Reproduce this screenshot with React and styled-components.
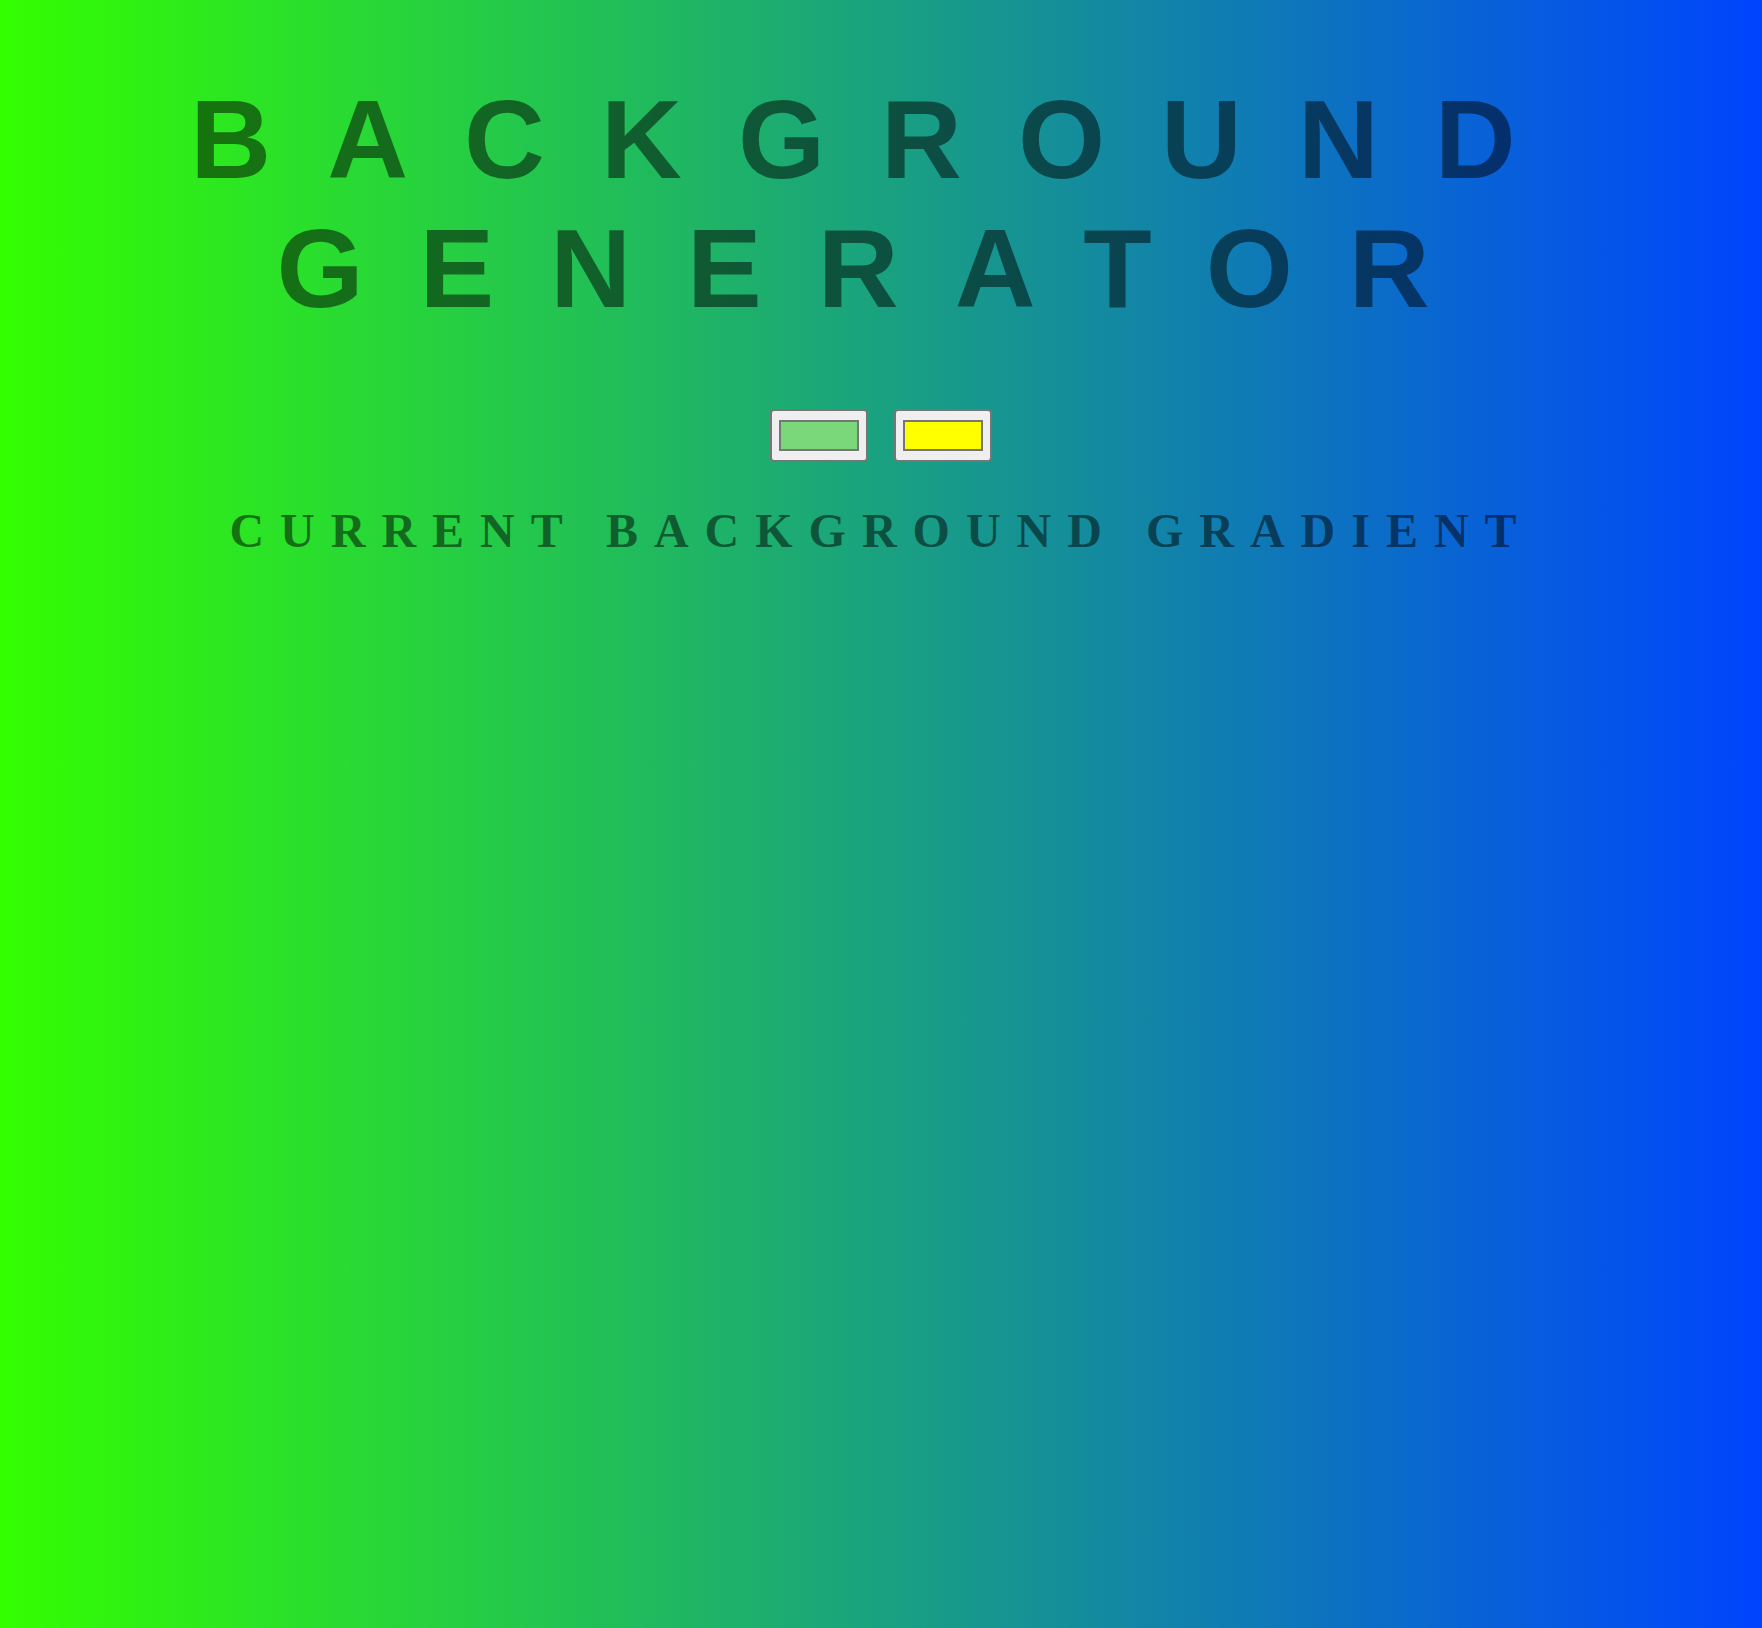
import { useState } from "react";
import styled, { createGlobalStyle } from "styled-components";

const GlobalStyle = createGlobalStyle`
  html {
    min-height: 100%;
  }
  body {
    margin: 0 8px;
    background: linear-gradient(to right, #33ff00, #0044ff);
    color: rgba(0, 0, 0, 0.5);
    text-align: center;
  }
`;

export default function App() {
  const [color1, setColor1] = useState("#7bd87a");
  const [color2, setColor2] = useState("#ffff00");

  return (
    <>
      <GlobalStyle />
      <Title>BACKGROUND GENERATOR</Title>
      <Controls>
        <ColorInput
          type="color"
          name="color1"
          value={color1}
          onChange={(e) => setColor1(e.target.value)}
        />
        <ColorInput
          type="color"
          name="color2"
          value={color2}
          onChange={(e) => setColor2(e.target.value)}
        />
      </Controls>
      <Subtitle>CURRENT BACKGROUND GRADIENT</Subtitle>
    </>
  );
}

const Title = styled.h1`
  margin: 0 0 75px;
  padding-top: 75px;
  font-family: "Liberation Sans", Arial, sans-serif;
  font-weight: 700;
  font-size: 112px;
  line-height: 129px;
  letter-spacing: 0.5em;
  color: rgba(0, 0, 0, 0.5);
`;

const Controls = styled.div`
  display: flex;
  justify-content: center;
  gap: 26px;
  padding-top: 1px;
`;

const ColorInput = styled.input`
  width: 98px;
  height: 53px;
  margin: 0;
  padding: 0;
  border: 2px solid #767676;
  border-radius: 4px;
  background: #efefef;
  cursor: pointer;
  &::-webkit-color-swatch-wrapper {
    padding: 9px 7px;
  }
  &::-webkit-color-swatch {
    border: 2px solid #767676;
    border-radius: 0;
  }
`;

const Subtitle = styled.h3`
  margin: 41px 0;
  font-family: "Liberation Serif", "Times New Roman", serif;
  font-weight: 700;
  font-size: 48px;
  letter-spacing: 16px;
  color: rgba(0, 0, 0, 0.5);
`;
